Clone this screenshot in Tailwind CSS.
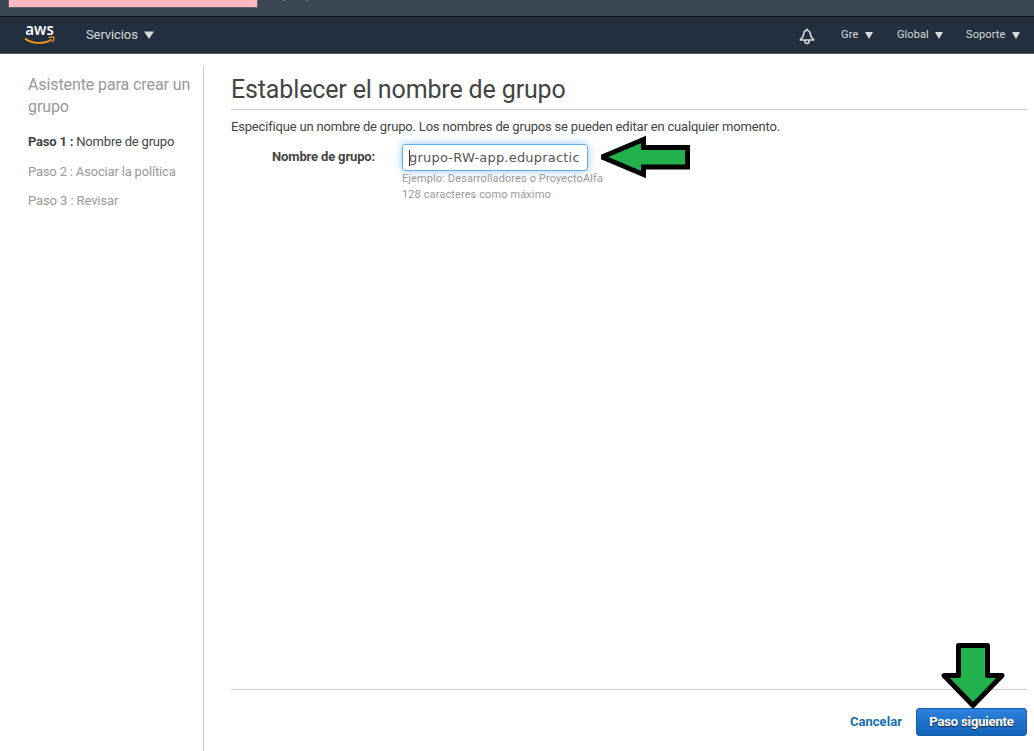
<!DOCTYPE html>
<html lang="es">
<head>
<meta charset="utf-8">
<title>Crear grupo</title>
<script src="https://cdn.jsdelivr.net/npm/@tailwindcss/browser@4"></script>
</head>
<body class="w-[1034px] h-[751px] overflow-hidden bg-white font-['Roboto',sans-serif] text-[13px] text-[#444] flex flex-col">
  <div class="h-4 shrink-0 bg-[#3a4652] pl-2 flex overflow-hidden">
    <div class="w-[250px] h-[8px] bg-[#ffbac1] border border-t-0 border-[#5d5f68]"></div>
    <div class="ml-[25px] flex gap-[21px]"><i class="w-[2px] h-px bg-[#77818b]"></i><i class="w-[2px] h-px bg-[#77818b]"></i></div>
  </div>
  <header class="h-[38px] shrink-0 bg-[#232f3e] border-t border-t-[#111417] border-b border-b-[#555a68] flex items-center text-[#d5dbdb] pl-6 pr-[14px]">
    <svg class="w-8 h-[22px] overflow-visible" viewBox="0 0 32 22">
      <text x="1.3" y="11" font-family="Open Sans" font-weight="600" font-size="16.500" textLength="28.5" lengthAdjust="spacingAndGlyphs" fill="#fff">aws</text>
      <path d="M1 14.500C8 20 20 20.500 27.500 15.500" fill="none" stroke="#f7981f" stroke-width="1.700"/>
      <path d="M24.500 13.600C27 12.700 29.500 12.800 30 13.500C30.300 14.800 29.300 17 28 18.300" fill="none" stroke="#f7981f" stroke-width="1.300"/>
    </svg>
    <div class="ml-[30px] flex items-center gap-[6px]"><span class="-tracking-[0.1px] w-[52px] whitespace-nowrap">Servicios</span><svg class="w-[10px] h-2" viewBox="0 0 10 8"><path d="M0 0.500H10L5 8Z" fill="#d5dbdb"/></svg></div>
    <div class="ml-auto flex items-center text-[11px]">
      <svg class="w-4 h-[17px] mr-[26px] mt-[3px]" viewBox="0 0 16 17" fill="none" stroke="#d5dbdb" stroke-width="1.600" stroke-linejoin="round"><path d="M8 0.500V2M1.200 12L4 8.500L5 4.500C6 1.500 10 1.500 11 4.500L12 8.500L14.800 12ZM5.800 12.500C5.800 16.500 10.200 16.500 10.200 12.500"/></svg>
      <span class="w-[18px] mr-[6px] tracking-[0.2px]">Gre</span><svg class="w-2 h-[7px] mr-[24px]" viewBox="0 0 8 7"><path d="M0 0H8L4 7Z" fill="#d5dbdb"/></svg>
      <span class="w-[32px] mr-[6px] tracking-[0.1px]">Global</span><svg class="w-2 h-[7px] mr-[23px]" viewBox="0 0 8 7"><path d="M0 0H8L4 7Z" fill="#d5dbdb"/></svg>
      <span class="w-[40px] mr-[6px] tracking-[0.1px]">Soporte</span><svg class="w-2 h-[7px]" viewBox="0 0 8 7"><path d="M0 0H8L4 7Z" fill="#d5dbdb"/></svg>
    </div>
  </header>
  <div class="flex flex-1 pt-[11px]">
    <aside class="w-[204px] shrink-0 border-r border-[#ccc] pl-7 pt-[9px] text-[#999]">
      <h2 class="text-[16px] leading-[22px] tracking-[-0.1px] whitespace-nowrap">Asistente para crear un<br>grupo</h2>
      <p class="mt-[9px] leading-[30px] text-[#444] h-[30px] whitespace-nowrap tracking-[-0.2px]"><b>Paso 1 :</b> Nombre de grupo</p>
      <p class="leading-[29px] h-[29px] whitespace-nowrap tracking-[-0.18px]">Paso 2 : Asociar la política</p>
      <p class="leading-[29px] h-[29px] tracking-[-0.1px]">Paso 3 : Revisar</p>
    </aside>
    <main class="ml-[27px] w-[796px] flex flex-col">
      <h1 class="h-[45px] border-b border-[#ccc] pt-[9px] text-[25px] leading-[32px] tracking-[-0.14px] whitespace-nowrap">Establecer el nombre de grupo</h1>
      <p class="mt-[9px] text-[13px] tracking-[-0.18px] leading-4 whitespace-nowrap">Especifique un nombre de grupo. Los nombres de grupos se pueden editar en cualquier momento.</p>
      <div class="flex mt-[9px]">
        <label class="w-[144px] text-right text-[13px] tracking-[-0.15px] leading-[26px] font-bold whitespace-nowrap">Nombre de grupo:</label>
        <div class="ml-[27px] relative">
          <div class="w-[186px] h-[27px] border border-[#66afe9] rounded-[3px] shadow-[0_0_8px_rgba(102,175,233,0.7)] pl-[6px] flex items-center font-['DejaVu_Sans',sans-serif] text-[13px] tracking-[0.2px] text-[#555] whitespace-nowrap"><i class="w-px h-4 -mr-px bg-[#333]"></i>grupo-RW-app.edupractic</div>
          <div class="text-[11px] tracking-[0.11px] leading-4 text-[#999] whitespace-nowrap">Ejemplo: Desarrolladores o ProyectoAlfa<br>128 caracteres como máximo</div>
          <svg class="absolute left-[196px] -top-[9px] w-[94px] h-[44px]" viewBox="0 0 94 44"><path d="M4 22L45.500 4.500V12.500H89.500V32H45.500V39.500Z" fill="#22b14c" stroke="#000" stroke-width="5" stroke-linejoin="miter" stroke-miterlimit="2"/></svg>
        </div>
      </div>
      <footer class="mt-auto h-[62px] border-t border-[#ccc] flex justify-end pt-[18px] relative">
        <a class="mr-[14px] leading-[28px] text-[13px] tracking-[0.05px] font-bold text-[#146eb4]">Cancelar</a>
        <button class="w-[111px] h-[28px] rounded-[3px] border border-[#1a5cad] bg-linear-to-b from-[#2e83de] to-[#0f63b8] text-white font-bold text-[13px] tracking-[-0.15px] whitespace-nowrap [text-shadow:0_1px_1px_#222]">Paso siguiente</button>
        <svg class="absolute left-[708px] -top-[49px] w-[68px] h-[68px]" viewBox="0 0 68 68"><path d="M19.500 4.500H48.500V34.500H63L34 64.500L5 34.500H19.500Z" fill="#22b14c" stroke="#000" stroke-width="5" stroke-linejoin="round"/></svg>
      </footer>
    </main>
  </div>
</body>
</html>
